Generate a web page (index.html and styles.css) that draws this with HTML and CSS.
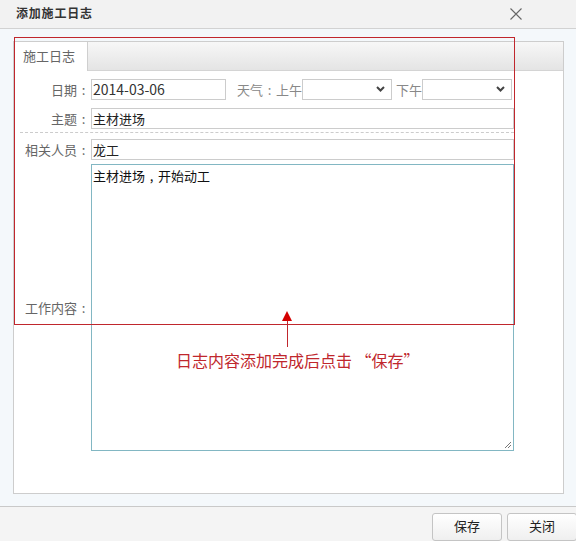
FILE: index.html
```html
<!DOCTYPE html>
<html lang="zh">
<head>
<meta charset="utf-8">
<title>添加施工日志</title>
<link rel="stylesheet" href="styles.css">
</head>
<body>
<div class="dialog">
  <div class="titlebar">
    <span class="title">添加施工日志</span>
    <svg class="close" width="12" height="12" viewBox="0 0 12 12"><path d="M0.5 0.5 L11.5 11.5 M11.5 0.5 L0.5 11.5" stroke="#666" stroke-width="1.1" fill="none"/></svg>
  </div>
  <div class="content">
    <div class="panel">
      <div class="tabs"><div class="tab">施工日志</div></div>
      <div class="form">
        <div class="row r1">
          <label class="lbl">日期<span class="p">:</span></label>
          <div class="field inline">
            <div class="input date">2014-03-06</div>
            <span class="txt wx">天气<span class="p">:</span>上午</span>
            <div class="select"><svg width="9" height="6" viewBox="0 0 9 6"><path d="M1 1 L4.5 4.5 L8 1" stroke="#444" stroke-width="2" fill="none"/></svg></div>
            <span class="txt pm">下午</span>
            <div class="select"><svg width="9" height="6" viewBox="0 0 9 6"><path d="M1 1 L4.5 4.5 L8 1" stroke="#444" stroke-width="2" fill="none"/></svg></div>
          </div>
        </div>
        <div class="row r2">
          <label class="lbl">主题<span class="p">:</span></label>
          <div class="field"><div class="input full">主材进场</div></div>
        </div>
        <div class="sep"></div>
        <div class="row r3">
          <label class="lbl">相关人员<span class="p">:</span></label>
          <div class="field"><div class="input full">龙工</div></div>
        </div>
        <div class="row r4">
          <label class="lbl">工作内容<span class="p">:</span></label>
          <div class="field"><div class="textarea">主材进场<span class="p">,</span>开始动工<svg class="grip" width="8" height="8" viewBox="0 0 8 8"><path d="M7 1 L1 7 M7 4 L4 7" stroke="#777" stroke-width="1" fill="none"/></svg></div></div>
        </div>
      </div>
    </div>
    <div class="highlight"></div>
    <div class="arrow"><div class="head"></div><div class="stem"></div></div>
    <div class="note">日志内容添加完成后点击 “保存”</div>
  </div>
  <div class="footer">
    <button class="btn">保存</button>
    <button class="btn last">关闭</button>
  </div>
</div>
</body>
</html>
```
FILE: styles.css
```css
* { box-sizing: border-box; }
html, body { margin: 0; padding: 0; }
body {
  width: 576px;
  height: 541px;
  overflow: hidden;
  font-family: "Noto Sans CJK SC", "Noto Sans", sans-serif;
  font-size: 13px;
  color: #333;
  background: #f4f8fb;
}
.p { display: inline-block; width: 13px; text-align: center; }
.dialog { width: 576px; height: 541px; display: flex; flex-direction: column; }
.titlebar {
  height: 29px;
  background: #f2f2f2;
  border-bottom: 1px solid #d2d2d2;
  display: flex;
  align-items: center;
  justify-content: space-between;
  padding: 0 54px 2px 16px;
}
.title { font-size: 12px; font-weight: bold; color: #333; letter-spacing: 0.8px; }
.close { display: block; margin-top: 2px; }
.content {
  position: relative;
  height: 481px;
  padding: 12px 12px 0 13px;
  background: #f4f8fb;
}
.panel {
  width: 551px;
  height: 453px;
  border: 1px solid #cdcdcd;
  background: #fff;
}
.tabs {
  height: 29px;
  background: linear-gradient(#f7f7f7, #e4e4e4);
  border-bottom: 1px solid #d4d4d4;
  display: flex;
}
.tab {
  width: 74px;
  height: 29px;
  background: #fff;
  border-right: 1px solid #cfcfcf;
  color: #666;
  font-size: 13px;
  line-height: 28px;
  padding-left: 9px;
}
.form { padding: 8px 49px 0 0; }
.row { display: flex; align-items: center; }
.lbl {
  width: 77px;
  flex: none;
  text-align: right;
  color: #666;
  font-size: 13px;
  padding-right: 1px;
}
.field { flex: 1; }
.inline { display: flex; align-items: center; }
.input {
  height: 21px;
  border: 1px solid #ccc;
  color: #222;
  font-size: 13px;
  line-height: 19px;
  padding-left: 1px;
  background: #fff;
}
.date { width: 135px; font-size: 14px; color: #333; }
.txt { color: #888; font-size: 13px; }
.wx { margin-left: 11px; }
.select {
  width: 90px;
  height: 21px;
  border: 1px solid #ccc;
  display: flex;
  align-items: center;
  justify-content: flex-end;
  padding-right: 6px;
}
.select svg { display: block; }
.pm { margin-left: 4px; }
.r2 { margin-top: 8px; }
.sep {
  margin: 3px 0 0 6px;
  border-top: 1px dashed #ccc;
  height: 0;
}
.r3 { margin-top: 6px; }
.r4 { margin-top: 4px; }
.textarea {
  position: relative;
  height: 287px;
  border: 1px solid #82b7c3;
  color: #111;
  font-size: 13px;
  line-height: 18px;
  padding: 2px 1px;
}
.grip { position: absolute; right: 1px; bottom: 1px; }
.highlight {
  position: absolute;
  left: 14px;
  top: 8px;
  width: 501px;
  height: 288px;
  border: 1px solid #c0272d;
}
.arrow { position: absolute; left: 281px; top: 282px; width: 12px; }
.arrow .head {
  width: 0; height: 0;
  margin: 0 auto;
  border-left: 5px solid transparent;
  border-right: 5px solid transparent;
  border-bottom: 10px solid #d40000;
}
.arrow .stem { width: 1px; height: 26px; background: #c0272d; margin: 0 auto; }
.note {
  position: absolute;
  left: 176px;
  top: 320px;
  color: #c0272d;
  font-size: 16px;
  line-height: 22px;
}
.footer {
  flex: 1;
  background: #f4f4f4;
  border-top: 1px solid #c9c9c9;
  display: flex;
  justify-content: flex-end;
  align-items: flex-start;
  padding-top: 6px;
}
.btn {
  width: 70px;
  height: 28px;
  border: 1px solid #c4c4c4;
  border-radius: 3px;
  background: linear-gradient(#ffffff, #efefef);
  font-family: "Noto Sans CJK SC", sans-serif;
  font-size: 13px;
  color: #222;
  padding: 0 0 4px 0;
  margin-right: 5px;
}
.btn.last { margin-right: -1px; }
```
